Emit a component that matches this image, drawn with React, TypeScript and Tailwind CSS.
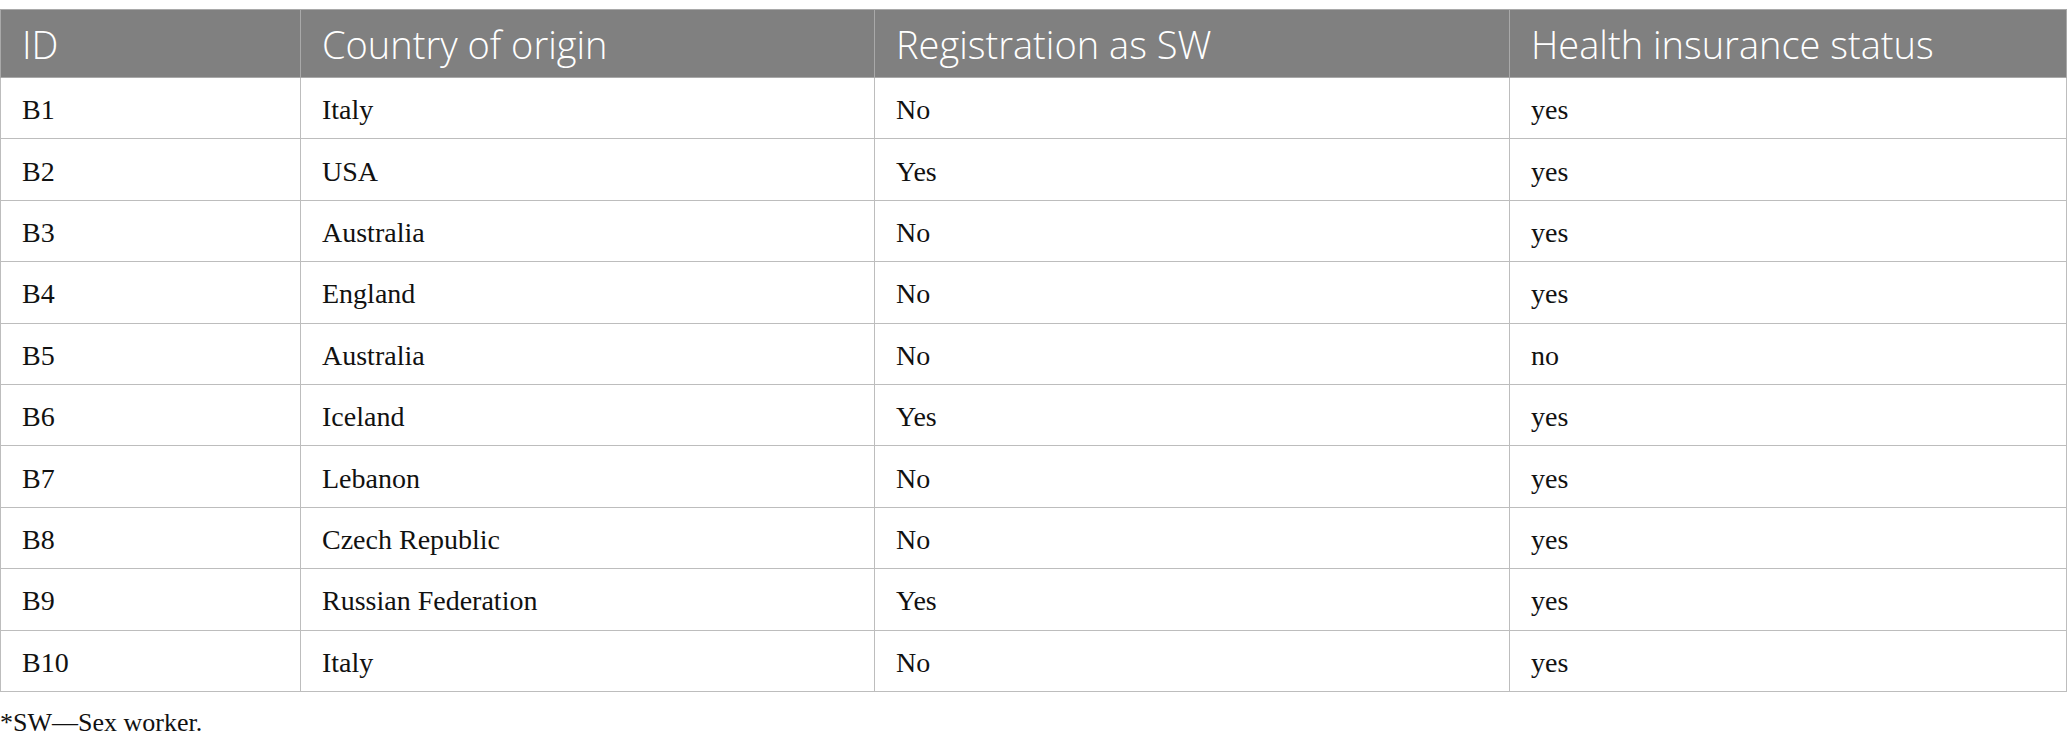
import React from "react";

const rows: [string, string, string, string][] = [
  ["B1", "Italy", "No", "yes"],
  ["B2", "USA", "Yes", "yes"],
  ["B3", "Australia", "No", "yes"],
  ["B4", "England", "No", "yes"],
  ["B5", "Australia", "No", "no"],
  ["B6", "Iceland", "Yes", "yes"],
  ["B7", "Lebanon", "No", "yes"],
  ["B8", "Czech Republic", "No", "yes"],
  ["B9", "Russian Federation", "Yes", "yes"],
  ["B10", "Italy", "No", "yes"],
];

const headers = ["ID", "Country of origin", "Registration as SW", "Health insurance status"];

export default function App() {
  return (
    <div className="w-[2067px] h-[749px] bg-white pt-[9px]">
      <table className="w-[2067px] border-collapse table-fixed">
        <colgroup>
          <col className="w-[300px]" />
          <col className="w-[574px]" />
          <col className="w-[635px]" />
          <col />
        </colgroup>
        <thead>
          <tr className="h-[68px] bg-[#808080]">
            {headers.map((h) => (
              <th
                key={h}
                className="border border-[#a9a9a9] px-[21px] text-left align-middle font-light text-white text-[38px] leading-none [font-family:'Open_Sans',sans-serif]"
              >
                {h}
              </th>
            ))}
          </tr>
        </thead>
        <tbody>
          {rows.map((r) => (
            <tr key={r[0]} className="h-[61.4px]">
              {r.map((c, i) => (
                <td
                  key={i}
                  className="border border-[#bdbdbd] px-[21px] pt-[4px] align-middle text-[28px] leading-none text-[#111111] [font-family:'Liberation_Serif',serif]"
                >
                  {c}
                </td>
              ))}
            </tr>
          ))}
        </tbody>
      </table>
      <div className="mt-[18px] text-[26px] leading-none text-[#111111] [font-family:'Liberation_Serif',serif]">
        *SW—Sex worker.
      </div>
    </div>
  );
}
